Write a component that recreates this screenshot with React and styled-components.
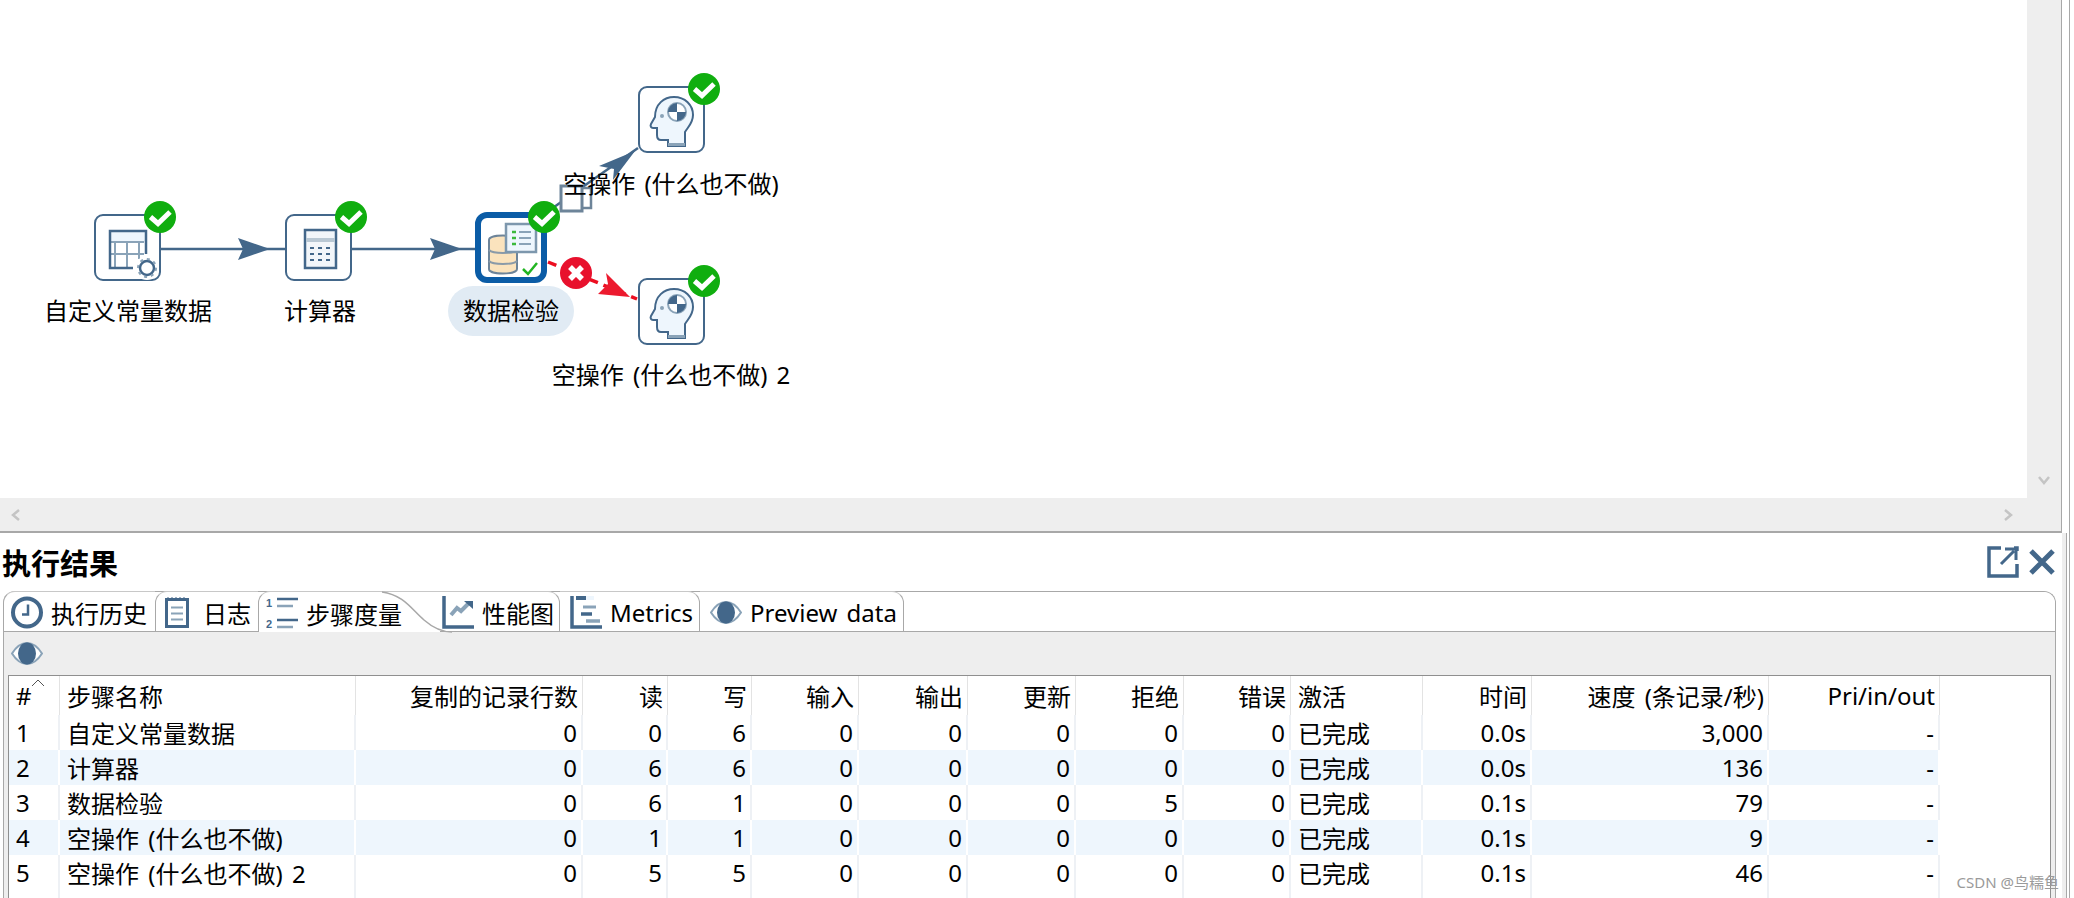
import React from 'react';
import styled, { createGlobalStyle } from 'styled-components';

const DARK = '#43678a';
const MID = '#8aa3b8';
const PALE = '#eef6fd';
const LINE = '#a8a8a8';
const FONT = `"Noto Sans", "Noto Sans CJK SC", sans-serif`;

const columns = [
  { name: '#', width: 51 },
  { name: '步骤名称', width: 296 },
  { name: '复制的记录行数', width: 227, right: true },
  { name: '读', width: 85, right: true },
  { name: '写', width: 84, right: true },
  { name: '输入', width: 107, right: true },
  { name: '输出', width: 109, right: true },
  { name: '更新', width: 108, right: true },
  { name: '拒绝', width: 108, right: true },
  { name: '错误', width: 107, right: true },
  { name: '激活', width: 132 },
  { name: '时间', width: 109, right: true },
  { name: '速度 (条记录/秒)', width: 237, right: true },
  { name: 'Pri/in/out', width: 171, right: true },
];

const gridColumns = columns.map((c) => `${c.width}px`).join(' ') + ' 1fr';

const rows = [
  ['1', '自定义常量数据', '0', '0', '6', '0', '0', '0', '0', '0', '已完成', '0.0s', '3,000', '-'],
  ['2', '计算器', '0', '6', '6', '0', '0', '0', '0', '0', '已完成', '0.0s', '136', '-'],
  ['3', '数据检验', '0', '6', '1', '0', '0', '0', '5', '0', '已完成', '0.1s', '79', '-'],
  ['4', '空操作 (什么也不做)', '0', '1', '1', '0', '0', '0', '0', '0', '已完成', '0.1s', '9', '-'],
  ['5', '空操作 (什么也不做) 2', '0', '5', '5', '0', '0', '0', '0', '0', '已完成', '0.1s', '46', '-'],
];

const CheckBadge = ({ selected }) => (
  <BadgeSvg viewBox="0 0 32 32" $selected={selected}>
    <circle cx="16" cy="16" r="16" fill="#10ae0f" />
    <path d="M6.5 16 L14 22.5 L26 11" fill="none" stroke="#fff" strokeWidth="5" />
  </BadgeSvg>
);

const HeadIcon = () => (
  <NodeSvg viewBox="0 0 66 66">
    <path d="M30 60 V54 H23 C20 54 19 52 19 49 V42 H15 C13 42 12 40 13 38 L17 31 C17 18 26 11 36 11 C47 11 55 19 55 29 C55 37 50 41 47 46 V60 Z" fill={PALE} stroke={DARK} strokeWidth="2" />
    <path d="M30 57 H47 V60 H30 Z" fill={MID} />
    <circle cx="39" cy="26" r="9" fill="#fff" stroke={MID} strokeWidth="2" />
    <path d="M39 26 V17 A9 9 0 0 0 30 26 Z M39 26 V35 A9 9 0 0 0 48 26 Z" fill={DARK} />
    <circle cx="24" cy="30" r="2" fill={MID} />
  </NodeSvg>
);

const TableIcon = () => (
  <NodeSvg viewBox="0 0 66 66">
    <rect x="15" y="16" width="38" height="12" fill={PALE} />
    <path d="M21 28 V54 M33 28 V54 M45 28 V45 M16 40 H50" stroke={MID} strokeWidth="2" fill="none" />
    <path d="M16 28 H50" stroke={MID} strokeWidth="2" fill="none" />
    <path d="M39 54 H16 V17 H52 V40" stroke={DARK} strokeWidth="2.5" fill="none" />
    <circle cx="53" cy="54" r="12" fill="#fff" />
    <circle cx="53" cy="54" r="7" fill="none" stroke={DARK} strokeWidth="2.5" />
    <circle cx="53" cy="54" r="9" fill="none" stroke={MID} strokeWidth="2" strokeDasharray="3 4" />
  </NodeSvg>
);

const CalculatorIcon = () => (
  <NodeSvg viewBox="0 0 66 66">
    <rect x="20" y="16" width="31" height="38" fill="#f2f6fa" stroke={DARK} strokeWidth="2.5" />
    <rect x="21" y="24" width="29" height="4" fill="#b9c8d4" />
    <path d="M25 34 H47 M25 40 H47 M25 46 H47" stroke={DARK} strokeWidth="2" strokeDasharray="4 4" />
  </NodeSvg>
);

const ValidatorIcon = () => (
  <NodeSvg viewBox="0 0 72 71" $selected>
    <path d="M14 28 C14 22 42 22 42 28 V57 C42 63 14 63 14 57 Z" fill="#fbe3bd" stroke="#6d8499" strokeWidth="2" />
    <path d="M14 38 C18 42 38 42 42 38 M14 49 C18 53 38 53 42 49" fill="none" stroke="#8a9aa8" strokeWidth="2" />
    <rect x="31" y="12" width="30" height="28" fill={PALE} stroke="#7d97ad" strokeWidth="2.5" />
    <path d="M37 20 H41 M37 26 H41 M37 32 H41" stroke="#3cb93c" strokeWidth="2.5" />
    <path d="M44 20 H56 M44 26 H56 M44 32 H56" stroke={MID} strokeWidth="2" />
    <path d="M48 57 L53 62 L62 51" fill="none" stroke="#22b522" strokeWidth="2.5" />
  </NodeSvg>
);

const ClockIcon = () => (
  <TabSvg viewBox="0 0 32 32">
    <circle cx="16" cy="16" r="14" fill="#fff" stroke={DARK} strokeWidth="4" />
    <path d="M17 8 V18 H11" fill="none" stroke={DARK} strokeWidth="2.5" />
  </TabSvg>
);

const NoteIcon = () => (
  <TabSvg viewBox="0 0 32 32">
    <rect x="6.5" y="3" width="21" height="27" fill="#fff" stroke={DARK} strokeWidth="3" />
    <path d="M8 1 V4 M12 1 V4 M16 1 V4 M20 1 V4 M24 1 V4" stroke={DARK} strokeWidth="2" />
    <path d="M11 11 H23 M11 17 H23 M11 23 H23" stroke={MID} strokeWidth="2" />
  </TabSvg>
);

const ListIcon = () => (
  <TabSvg viewBox="0 0 32 33">
    <text x="0" y="10" fontSize="11" fontWeight="700" fill={DARK} fontFamily="Liberation Sans, sans-serif">1</text>
    <text x="0" y="31" fontSize="11" fontWeight="700" fill={DARK} fontFamily="Liberation Sans, sans-serif">2</text>
    <path d="M11 2 H32 M11 23 H32" stroke={DARK} strokeWidth="2.5" />
    <path d="M11 9 H27 M11 30 H27" stroke={MID} strokeWidth="2.5" />
  </TabSvg>
);

const ChartIcon = () => (
  <TabSvg viewBox="0 0 32 33">
    <path d="M2 0 V31 H32" fill="none" stroke={DARK} strokeWidth="3.5" />
    <path d="M9 19 L15 12 L19 15 L27 7" fill="none" stroke={MID} strokeWidth="4" />
    <path d="M22 5 H31 V13 Z" fill={DARK} />
  </TabSvg>
);

const GanttIcon = () => (
  <TabSvg viewBox="0 0 32 33">
    <path d="M2 0 V31 H32" fill="none" stroke={DARK} strokeWidth="3.5" />
    <path d="M6 2 H16" stroke={DARK} strokeWidth="4" />
    <path d="M16 2 H24" stroke={PALE} strokeWidth="4" />
    <path d="M13 11 H26" stroke={MID} strokeWidth="3" />
    <path d="M11 18 H22" stroke={DARK} strokeWidth="3.5" />
    <path d="M16 25 H30" stroke={MID} strokeWidth="3.5" />
  </TabSvg>
);

const EyeIcon = () => (
  <EyeSvg viewBox="0 0 32 23">
    <path d="M1 11.5 C7 2 12 1 16 1 C20 1 25 2 31 11.5 C25 21 20 22 16 22 C12 22 7 21 1 11.5 Z" fill="#fff" stroke={MID} strokeWidth="2" />
    <ellipse cx="16" cy="11.5" rx="9" ry="11" fill={DARK} />
  </EyeSvg>
);

const Connections = () => (
  <LinkSvg viewBox="0 0 2027 498">
    <path d="M161 249 H285 M352 249 H475" stroke={DARK} strokeWidth="2.5" />
    <path d="M238 238 L270 249 L238 260 L243 249 Z M430 238 L462 249 L430 260 L435 249 Z" fill={DARK} />
    <path d="M547 212 L638 148" fill="none" stroke={DARK} strokeWidth="2.5" />
    <path d="M635 151 L599 166 L614 169 L613 180 Z" fill={DARK} />
    <rect x="580" y="188" width="11" height="20" fill="#fff" stroke="#6d8499" strokeWidth="2.5" />
    <rect x="561" y="186" width="21" height="25" fill="#fff" stroke="#6d8499" strokeWidth="3" />
    <path d="M548 262 L637 299" stroke="#ec0e20" strokeWidth="3.5" strokeDasharray="9 6" />
    <path d="M630 297 L606 273 L608 284 L598 294 Z" fill="#ec1a2e" />
    <circle cx="576" cy="273" r="16" fill="#e8112d" />
    <path d="M570 267 L582 279 M582 267 L570 279" stroke="#fff" strokeWidth="5.5" />
  </LinkSvg>
);

const App = () => {
  return (
    <Page>
      <GlobalStyle />
      <Main>
        <Editor>
          <CanvasRow>
            <Canvas>
              <Connections />
              <StepNode $x={94} $y={214}><TableIcon /><CheckBadge /></StepNode>
              <StepNode $x={285} $y={214}><CalculatorIcon /><CheckBadge /></StepNode>
              <StepNode $x={475} $y={212} $selected><ValidatorIcon /><CheckBadge selected /></StepNode>
              <StepNode $x={638} $y={86}><HeadIcon /><CheckBadge /></StepNode>
              <StepNode $x={638} $y={278}><HeadIcon /><CheckBadge /></StepNode>
              <StepLabel $x={128} $y={311}>自定义常量数据</StepLabel>
              <StepLabel $x={320} $y={311}>计算器</StepLabel>
              <StepLabel $x={511} $y={311} $selected>数据检验</StepLabel>
              <StepLabel $x={671} $y={184}>空操作 (什么也不做)</StepLabel>
              <StepLabel $x={671} $y={375}>空操作 (什么也不做) 2</StepLabel>
            </Canvas>
            <VScroll>
              <ScrollGlyph viewBox="0 0 12 10"><path d="M1 2 L6 8 L11 2" /></ScrollGlyph>
            </VScroll>
          </CanvasRow>
          <HScroll>
            <ScrollGlyph viewBox="0 0 10 12"><path d="M2 1 L8 6 L2 11" transform="rotate(180 5 6)" /></ScrollGlyph>
            <ScrollGlyph viewBox="0 0 10 12"><path d="M2 1 L8 6 L2 11" /></ScrollGlyph>
          </HScroll>
        </Editor>
        <Results>
          <TitleBar>
            <Title>执行结果</Title>
            <TitleActions>
              <svg width="32" height="32" viewBox="0 0 32 32">
                <path d="M14 2 H2 V30 H30 V18 M27 2 H30 V5" fill="none" stroke={DARK} strokeWidth="3.5" />
                <path d="M14 18 L27 5 M18 3 H29 V14" fill="none" stroke={DARK} strokeWidth="3" />
              </svg>
              <svg width="28" height="28" viewBox="0 0 28 28">
                <path d="M3 3 L25 25 M25 3 L3 25" stroke={DARK} strokeWidth="5" />
              </svg>
            </TitleActions>
          </TitleBar>
          <Folder>
            <TabRow>
              <Tab $w={152} $pad={7} $curve="left"><ClockIcon />执行历史</Tab>
              <Tab $w={103} $pad={4} $gap={11} $curve="left"><NoteIcon />日志</Tab>
              <Tab $w={182} $pad={7} $selected>
                <ListIcon />步骤度量
                <TabSwoop viewBox="0 0 70 41" preserveAspectRatio="none">
                  <path d="M0 0 C22 3 30 18 42 28 C50 35 58 40 70 40" />
                </TabSwoop>
              </Tab>
              <Tab $w={120} $pad={2}><ChartIcon />性能图</Tab>
              <Tab $w={140} $pad={10}><GanttIcon />Metrics</Tab>
              <Tab $w={204} $pad={10}><EyeIcon />Preview data</Tab>
            </TabRow>
            <Toolbar><EyeIcon /></Toolbar>
            <TableWrap>
              <MetricsTable>
                <HeaderRow>
                  {columns.map((c) => (
                    <HeaderCell key={c.name} $right={c.right}>
                      {c.name}
                      {c.name === '#' && <SortCaret viewBox="0 0 14 8"><path d="M1 7 L7 1 L13 7" /></SortCaret>}
                    </HeaderCell>
                  ))}
                  <div />
                </HeaderRow>
                {rows.map((row, i) => (
                  <DataRow key={row[0]} $alt={i % 2 === 1}>
                    {row.map((value, j) => (
                      <DataCell key={j} $right={columns[j].right} $alt={i % 2 === 1}>{value}</DataCell>
                    ))}
                    <FillerCell />
                  </DataRow>
                ))}
                <DataRow>
                  {columns.map((c) => <DataCell key={c.name} />)}
                  <FillerCell />
                </DataRow>
              </MetricsTable>
            </TableWrap>
          </Folder>
        </Results>
      </Main>
      <Strip>
        <StripGutter />
        <StripRule />
      </Strip>
      <Watermark>CSDN @鸟糯鱼</Watermark>
    </Page>
  );
};

const GlobalStyle = createGlobalStyle`
  html, body {
    margin: 0;
    padding: 0;
    background: #fff;
  }
`;

const Page = styled.div`
  position: relative;
  display: flex;
  width: 2074px;
  height: 898px;
  overflow: hidden;
  background: #fff;
  color: #000;
  font-family: ${FONT};
  font-size: 24px;
  word-spacing: 3px;
`;

const Main = styled.div`
  flex: none;
  width: 2062px;
`;

const Strip = styled.div`
  flex: 1;
  display: flex;
`;

const StripGutter = styled.div`
  width: 4px;
  margin-top: 533px;
  background: #eeeeee;
  border-right: 1px solid ${LINE};
`;

const StripRule = styled.div`
  width: 1px;
  margin-left: 2px;
  background: ${LINE};
`;

const Editor = styled.div`
  border-right: 1px solid ${LINE};
  border-bottom: 2px solid ${LINE};
  background: #eeeeee;
`;

const CanvasRow = styled.div`
  display: flex;
  height: 498px;
`;

const Canvas = styled.div`
  position: relative;
  width: 2027px;
  background: #fff;
`;

const VScroll = styled.div`
  flex: 1;
  display: flex;
  align-items: flex-end;
  justify-content: center;
  padding-bottom: 12px;
`;

const HScroll = styled.div`
  height: 33px;
  display: flex;
  align-items: center;
  justify-content: space-between;
  padding: 0 47px 0 10px;
`;

const ScrollGlyph = styled.svg`
  width: 12px;
  height: 12px;

  path {
    fill: none;
    stroke: #c4c4c4;
    stroke-width: 2.5;
  }
`;

const LinkSvg = styled.svg`
  position: absolute;
  left: 0;
  top: 0;
  width: 2027px;
  height: 498px;
`;

const StepNode = styled.div`
  position: absolute;
  left: ${(p) => p.$x}px;
  top: ${(p) => p.$y}px;
  box-sizing: border-box;
  width: ${(p) => (p.$selected ? 72 : 67)}px;
  height: ${(p) => (p.$selected ? 71 : 67)}px;
  border: ${(p) => (p.$selected ? '6px solid #0b5ca6' : `2px solid ${DARK}`)};
  border-radius: ${(p) => (p.$selected ? 12 : 9)}px;
  background: #fff;
`;

const NodeSvg = styled.svg`
  position: absolute;
  left: ${(p) => (p.$selected ? -6 : -2)}px;
  top: ${(p) => (p.$selected ? -6 : -2)}px;
  width: ${(p) => (p.$selected ? 72 : 66)}px;
  height: ${(p) => (p.$selected ? 71 : 66)}px;
`;

const BadgeSvg = styled.svg`
  position: absolute;
  right: ${(p) => (p.$selected ? -19 : -17)}px;
  top: ${(p) => (p.$selected ? -17 : -15)}px;
  width: 32px;
  height: 32px;
`;

const StepLabel = styled.div`
  position: absolute;
  left: ${(p) => p.$x}px;
  top: ${(p) => p.$y}px;
  transform: translate(-50%, -50%);
  white-space: nowrap;
  line-height: 32px;
  padding: ${(p) => (p.$selected ? '9px 15px' : '0')};
  border-radius: 25px;
  background: ${(p) => (p.$selected ? '#e1ebf4' : 'transparent')};
`;

const Results = styled.div`
  box-sizing: border-box;
  width: 2056px;
  padding-left: 3px;
`;

const TitleBar = styled.div`
  height: 58px;
  display: flex;
  align-items: center;
  justify-content: space-between;
  margin-left: -1px;
`;

const Title = styled.div`
  font-size: 29px;
  font-weight: 700;
`;

const TitleActions = styled.div`
  display: flex;
  align-items: center;
  gap: 9px;
`;

const Folder = styled.div`
  border: 1px solid ${LINE};
  border-bottom: none;
  border-radius: 12px 12px 0 0;
`;

const TabRow = styled.div`
  display: flex;
  height: 39px;
  margin-left: -1px;
  background: #fff;
  border-bottom: 1px solid ${LINE};
  border-radius: 12px 12px 0 0;
`;

const Tab = styled.div`
  position: relative;
  box-sizing: border-box;
  width: ${(p) => p.$w}px;
  height: ${(p) => (p.$selected ? 41 : 40)}px;
  margin-top: -1px;
  display: flex;
  align-items: center;
  gap: ${(p) => p.$gap ?? 8}px;
  padding-left: ${(p) => p.$pad}px;
  padding-top: 2px;
  white-space: nowrap;
  background: #fff;
  z-index: ${(p) => (p.$selected ? 1 : 0)};
  border-top: 1px solid #c8c8c8;
  border-left: ${(p) => (p.$curve === 'left' || p.$selected ? `1px solid ${LINE}` : 'none')};
  border-right: ${(p) => (p.$curve || p.$selected ? 'none' : `1px solid ${LINE}`)};
  border-top-left-radius: ${(p) => (p.$curve === 'left' || p.$selected ? '12px' : '0')};
  border-top-right-radius: ${(p) => (p.$curve || p.$selected ? '0' : '12px')};
`;

const TabSwoop = styled.svg`
  position: absolute;
  right: -12px;
  top: 0;
  width: 70px;
  height: 41px;
  overflow: visible;

  path {
    fill: none;
    stroke: ${LINE};
    stroke-width: 1.5;
  }
`;

const TabSvg = styled.svg`
  flex: none;
  width: 32px;
  height: 33px;
`;

const EyeSvg = styled.svg`
  flex: none;
  width: 32px;
  height: 23px;
`;

const Toolbar = styled.div`
  height: 43px;
  display: flex;
  align-items: center;
  padding-left: 7px;
  background: #eeeeee;
`;

const TableWrap = styled.div`
  padding: 0 4px;
  background: #eeeeee;
`;

const MetricsTable = styled.div`
  height: 223px;
  overflow: hidden;
  background: #fff;
  border-top: 1px solid #8f8f8f;
  border-left: 1px solid #8f8f8f;
  border-right: 1px solid #8f8f8f;
`;

const HeaderRow = styled.div`
  display: grid;
  grid-template-columns: ${gridColumns};
  height: 39px;
`;

const HeaderCell = styled.div`
  position: relative;
  display: flex;
  align-items: center;
  justify-content: ${(p) => (p.$right ? 'flex-end' : 'flex-start')};
  padding: 0 4px 0 7px;
  white-space: nowrap;
  border-right: 1px solid #e3e3e3;
`;

const SortCaret = styled.svg`
  position: absolute;
  left: 22px;
  top: 3px;
  width: 14px;
  height: 8px;

  path {
    fill: none;
    stroke: #555;
    stroke-width: 1;
  }
`;

const DataRow = styled.div`
  display: grid;
  grid-template-columns: ${gridColumns};
  height: 35px;
  box-sizing: border-box;
  border-bottom: 2px solid #eef1f5;
`;

const DataCell = styled.div`
  display: flex;
  align-items: center;
  justify-content: ${(p) => (p.$right ? 'flex-end' : 'flex-start')};
  padding: 0 4px 0 7px;
  white-space: nowrap;
  background: ${(p) => (p.$alt ? PALE : '#fff')};
  border-right: 2px solid ${(p) => (p.$alt ? '#fff' : '#eef1f5')};
`;

const FillerCell = styled.div`
  background: #fff;
`;

const Watermark = styled.div`
  position: absolute;
  right: 15px;
  bottom: 6px;
  font-size: 15px;
  line-height: 20px;
  color: #9a9a9a;
  word-spacing: 0;
`;

export default App;
